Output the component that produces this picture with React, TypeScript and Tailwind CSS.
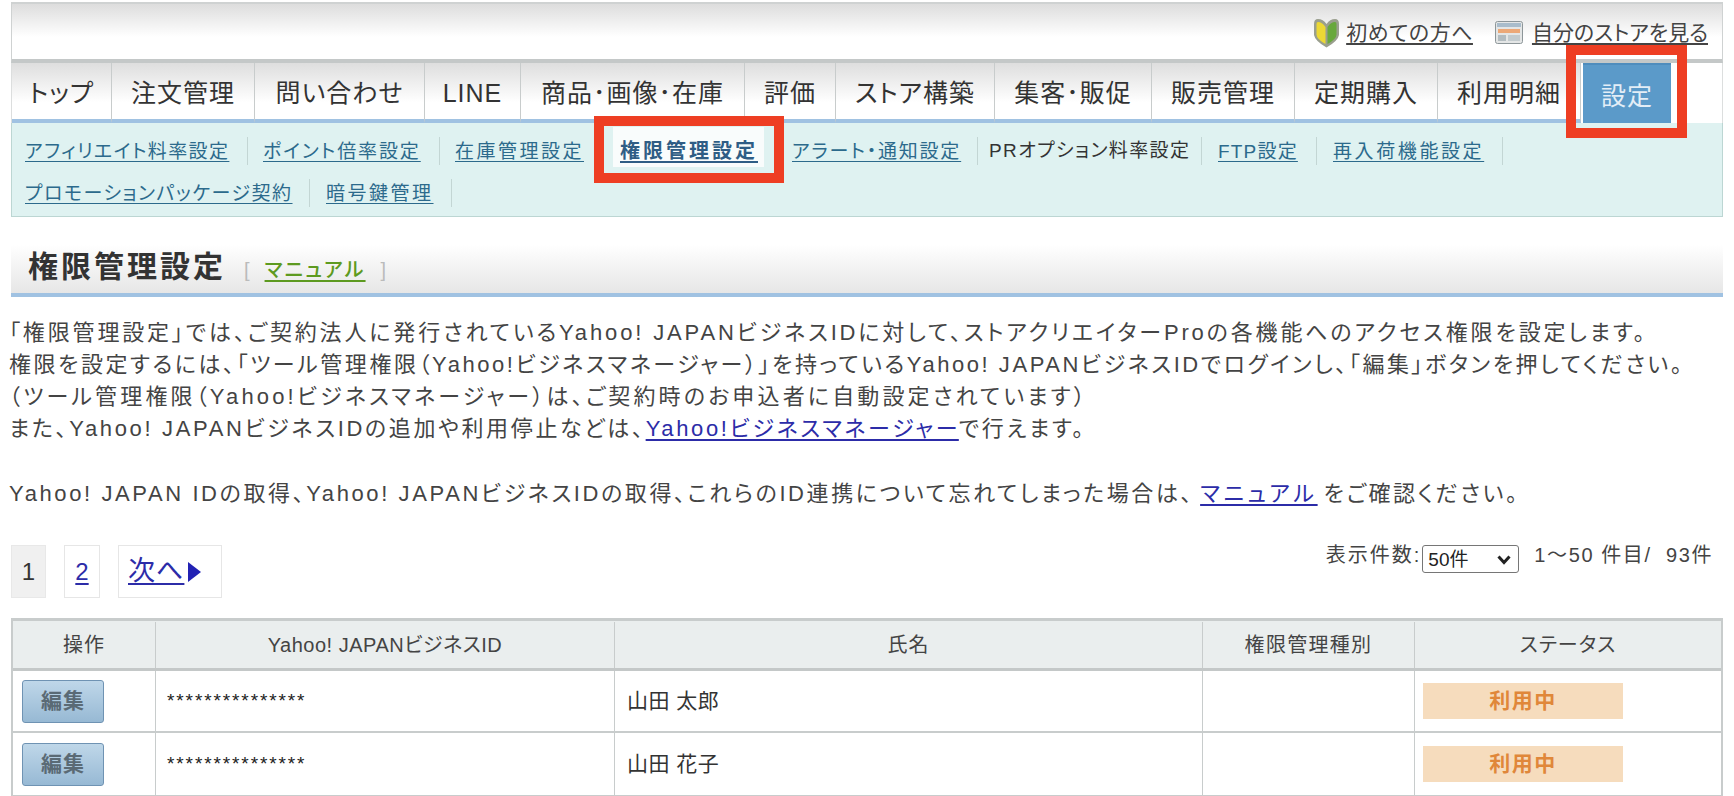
import React from 'react';

const tabs = [
  { label: 'トップ', w: 'w-[100px]' },
  { label: '注文管理', w: 'w-[143px]' },
  { label: '問い合わせ', w: 'w-[170px]' },
  { label: 'LINE', w: 'w-[96px]' },
  { label: '商品･画像･在庫', w: 'w-[224px]' },
  { label: '評価', w: 'w-[91px]' },
  { label: 'ストア構築', w: 'w-[159px]' },
  { label: '集客･販促', w: 'w-[157px]' },
  { label: '販売管理', w: 'w-[143px]' },
  { label: '定期購入', w: 'w-[143px]' },
  { label: '利用明細', w: 'w-[143px]' },
];

const users = [
  { name: '山田 太郎', h: 'h-[62px]' },
  { name: '山田 花子', h: 'h-[64px]' },
];

function SubLink({ label, w }: { label: string; w: string }) {
  return (
    <div className={`${w} h-[28px] flex items-center border-r border-[#c3d6d4]`}>
      <a className="pt-[3px] underline text-[#2c6a8c] whitespace-nowrap underline-offset-3">{label}</a>
    </div>
  );
}

function Shield() {
  return (
    <svg width="27" height="30" viewBox="0 0 27 30">
      <path d="M5 1 Q10 1 13.5 6 Q17 1 22 1 Q26 1 26 6 L26 17 Q25 23 13.5 29.5 Q2 23 1 17 L1 6 Q1 1 5 1 Z" fill="#9a9f8e" />
      <path d="M5 4 Q9 4 12.5 9 L12.5 26 Q3.5 21 3.5 16.5 L3.5 6 Q3.5 4 5 4 Z" fill="#ecd834" />
      <path d="M22 4 Q18 4 14.5 9 L14.5 26 Q23.5 21 23.5 16.5 L23.5 6 Q23.5 4 22 4 Z" fill="#68a83c" />
    </svg>
  );
}

function StoreIcon() {
  return (
    <svg width="28" height="23" viewBox="0 0 28 23">
      <rect x="0.5" y="0.5" width="27" height="22" rx="2" fill="#e4e6e6" stroke="#8d9699" />
      <rect x="2" y="2" width="24" height="4" fill="#a9bccb" />
      <rect x="3" y="8" width="22" height="4" fill="#eca877" />
      <rect x="3" y="14" width="8" height="6" fill="#b3bcc0" />
      <rect x="13" y="14" width="12" height="6" fill="#c3cbce" />
    </svg>
  );
}

function EditButton() {
  return (
    <button className="w-[82px] h-[43px] rounded-[3px] border border-[#6f93b3] bg-gradient-to-b from-[#bfd7e9] to-[#97b9d4] text-[21px] font-bold text-[#5a6a75] tracking-[1px]">
      編集
    </button>
  );
}

export default function App() {
  return (
    <div className="w-[1734px] h-[796px] overflow-hidden relative bg-white text-[#333] [font-family:'Liberation_Sans','Noto_Sans_CJK_JP',sans-serif] [font-feature-settings:'palt']">
      <div className="pt-[2px] pl-[11px] pr-[11px]">
        {/* top bar */}
        <div className="h-[61px] border-t-2 border-x border-[#cfd2d2] border-b-[4px] border-b-[#c4c8c8] bg-gradient-to-b from-[#dddddd] via-white via-60% to-white flex items-start justify-end pt-[13px] pr-[14px] text-[21px] text-[#444]">
          <div className="flex items-center gap-[6px]">
            <Shield />
            <a className="underline underline-offset-3 tracking-[0.5px] whitespace-nowrap">初めての方へ</a>
          </div>
          <div className="flex items-center gap-[9px] ml-[22px]">
            <StoreIcon />
            <a className="underline underline-offset-3 whitespace-nowrap">自分のストアを見る</a>
          </div>
        </div>

        {/* main tabs */}
        <div className="h-[60px] flex border-x border-[#dcdede]">
          {tabs.map((t) => (
            <div
              key={t.label}
              className={`${t.w} shrink-0 flex items-center justify-center pt-[5px] border-r border-[#c8cccc] border-b-[4px] border-b-[#a0c2e2] bg-gradient-to-b from-[#dedede] via-white via-70% to-white text-[25px] tracking-[1px] text-[#333] whitespace-nowrap`}
            >
              {t.label}
            </div>
          ))}
          <div className="ml-[2px] w-[88px] flex items-center justify-center pt-[5px] bg-[#5b9ac9] border-t-2 border-[#4f8dbd] text-[25px] tracking-[1px] text-[#e3eef7]">
            設定
          </div>
        </div>

        {/* sub navigation */}
        <div className="h-[94px] bg-[#dff2f1] border-x border-b border-[#bcd6d3] pt-[14px] text-[19px]">
          <div className="flex h-[28px]">
            <SubLink label="アフィリエイト料率設定" w="w-[236px] pl-[13px] tracking-[1.4px]" />
            <SubLink label="ポイント倍率設定" w="w-[192px] pl-[15px] tracking-[1.9px]" />
            <SubLink label="在庫管理設定" w="w-[164px] pl-[15px] tracking-[2.5px]" />
            <div className="w-[173px] h-[28px]">
              <div className="ml-[9px] w-[151px] h-[40px] -mt-[10px] pt-[9px] pl-[7px] bg-white/80">
                <a className="underline font-bold text-[20px] text-[#2f5d85] whitespace-nowrap underline-offset-3 tracking-[3px]">権限管理設定</a>
              </div>
            </div>
            <SubLink label="アラート・通知設定" w="w-[201px] pl-[15px] tracking-[1.8px]" />
            <div className="w-[224px] h-[28px] flex items-center pl-[11px] border-r border-[#c3d6d4] text-[#333] whitespace-nowrap tracking-[1.4px]">
              PRオプション料率設定
            </div>
            <SubLink label="FTP設定" w="w-[115px] pl-[16px] tracking-[1.2px]" />
            <SubLink label="再入荷機能設定" w="w-[186px] pl-[16px] tracking-[2.6px]" />
          </div>
          <div className="flex h-[28px] mt-[14px]">
            <SubLink label="プロモーションパッケージ契約" w="w-[298px] pl-[13px] tracking-[1.5px]" />
            <SubLink label="暗号鍵管理" w="w-[142px] pl-[16px] tracking-[2.5px]" />
          </div>
        </div>

        {/* page title */}
        <div className="mt-[7px] h-[73px] flex items-center border-b-[4px] border-[#a0c2e2] bg-gradient-to-b from-white via-white via-30% to-[#e6e6e6] pl-[17px] pt-[16px]">
          <h1 className="text-[30px] font-bold tracking-[3px] text-[#333] whitespace-nowrap">権限管理設定</h1>
          <span className="ml-[18px] mt-[6px] text-[#bbb] text-[20px]">[</span>
          <a className="ml-[15px] mt-[6px] underline underline-offset-3 text-[#5d9a20] text-[20px] font-medium tracking-[2.2px] whitespace-nowrap">マニュアル</a>
          <span className="ml-[15px] mt-[6px] text-[#bbb] text-[20px]">]</span>
        </div>
      </div>

      {/* description */}
      <div className="pl-[9px] mt-[20px] text-[22px] leading-[32px] text-[#444] whitespace-nowrap">
        <p className="tracking-[2.85px]">「権限管理設定」では、ご契約法人に発行されているYahoo! JAPANビジネスIDに対して、ストアクリエイターProの各機能へのアクセス権限を設定します。</p>
        <p className="tracking-[2.55px]">権限を設定するには、「ツール管理権限（Yahoo!ビジネスマネージャー）」を持っているYahoo! JAPANビジネスIDでログインし、「編集」ボタンを押してください。</p>
        <p className="tracking-[3.15px]">（ツール管理権限（Yahoo!ビジネスマネージャー）は、ご契約時のお申込者に自動設定されています）</p>
        <p className="tracking-[2.65px]">
          また、Yahoo! JAPANビジネスIDの追加や利用停止などは、
          <a className="underline underline-offset-3 text-[#2c2ca8]">Yahoo!ビジネスマネージャー</a>
          で行えます。
        </p>
        <p className="mt-[33px] tracking-[2.6px]">
          Yahoo! JAPAN IDの取得、Yahoo! JAPANビジネスIDの取得、これらのID連携について忘れてしまった場合は、
          <a className="underline underline-offset-3 text-[#2c2ca8] ml-[6px] tracking-[3.7px]">マニュアル</a>
          <span className="ml-[6px]">をご確認ください。</span>
        </p>
      </div>

      {/* pager */}
      <div className="mt-[35px] pl-[11px] pr-[21px] flex justify-between items-start h-[73px]">
        <div className="flex gap-[18px] text-[24px]">
          <span className="w-[35px] h-[53px] flex items-center justify-center bg-[#f0f0f0] border border-[#e8e8e8] text-[#333]">1</span>
          <a className="w-[36px] h-[53px] flex items-center justify-center border border-[#e6e6e6] underline underline-offset-3 text-[#2c2ca8]">2</a>
          <a className="w-[104px] h-[53px] pl-[9px] flex items-center gap-[4px] border border-[#e6e6e6] text-[#2c2ca8] text-[27px]">
            <span className="underline underline-offset-3 tracking-[1px]">次へ</span>
            <svg width="13" height="20" viewBox="0 0 13 20">
              <polygon points="0,0 13,10 0,20" fill="#2222b4" />
            </svg>
          </a>
        </div>
        <div className="flex items-start text-[20px] text-[#444] whitespace-nowrap">
          <span className="-mt-[5px] tracking-[2px]">表示件数:</span>
          <div className="relative ml-[1px]">
            <select className="block w-[97px] h-[28px] pl-[5px] appearance-none bg-white border border-[#767676] rounded-[3px] text-[19px] text-[#222]" defaultValue="50">
              <option value="50">50件</option>
            </select>
            <svg className="absolute right-[8px] top-[10px]" width="14" height="10" viewBox="0 0 14 10">
              <path d="M1.5 1.5 L7 7.5 L12.5 1.5" fill="none" stroke="#222" strokeWidth="3" />
            </svg>
          </div>
          <span className="-mt-[5px] ml-[15px] tracking-[1.6px]">1〜50 件目/ &nbsp;93件</span>
        </div>
      </div>

      {/* table */}
      <div className="mx-[11px] border-t-[3px] border-x-2 border-[#c8cccc]">
        <div className="flex h-[50px] pt-[1px] bg-[#eaeeee] border-b-[3px] border-[#c4c8c8] text-[20px] text-[#444]">
          <div className="w-[143px] flex items-center justify-center border-r border-[#c8cccc] tracking-[1px]">操作</div>
          <div className="w-[459px] flex items-center justify-center border-r border-[#c8cccc] tracking-[0.5px]">Yahoo! JAPANビジネスID</div>
          <div className="w-[588px] flex items-center justify-center border-r border-[#c8cccc] tracking-[1px]">氏名</div>
          <div className="w-[212px] flex items-center justify-center border-r border-[#c8cccc] tracking-[1.3px]">権限管理種別</div>
          <div className="flex-1 flex items-center justify-center tracking-[1px]">ステータス</div>
        </div>
        {users.map((u) => (
          <div key={u.name} className={`flex ${u.h} border-b-2 border-[#c8cccc]`}>
            <div className="w-[143px] flex items-center pl-[9px] border-r border-[#c8cccc]">
              <EditButton />
            </div>
            <div className="w-[459px] flex items-center pl-[11px] border-r border-[#c8cccc] text-[19px] text-[#222] tracking-[1.9px]">
              ***************
            </div>
            <div className="w-[588px] flex items-center pl-[12px] border-r border-[#c8cccc] text-[21px] tracking-[0.5px]">{u.name}</div>
            <div className="w-[212px] border-r border-[#c8cccc]"></div>
            <div className="flex-1 flex items-center pl-[8px]">
              <span className="w-[200px] h-[36px] flex items-center justify-center bg-[#f6dcbd] text-[#e0873a] font-bold text-[21px] tracking-[1.5px]">利用中</span>
            </div>
          </div>
        ))}
      </div>

      {/* red annotation boxes */}
      <div className="absolute left-[1566px] top-[45px] w-[121px] h-[93px] border-[10px] border-[#ee3e23]"></div>
      <div className="absolute left-[594px] top-[116px] w-[190px] h-[67px] border-[10px] border-[#ee3e23]"></div>
    </div>
  );
}
